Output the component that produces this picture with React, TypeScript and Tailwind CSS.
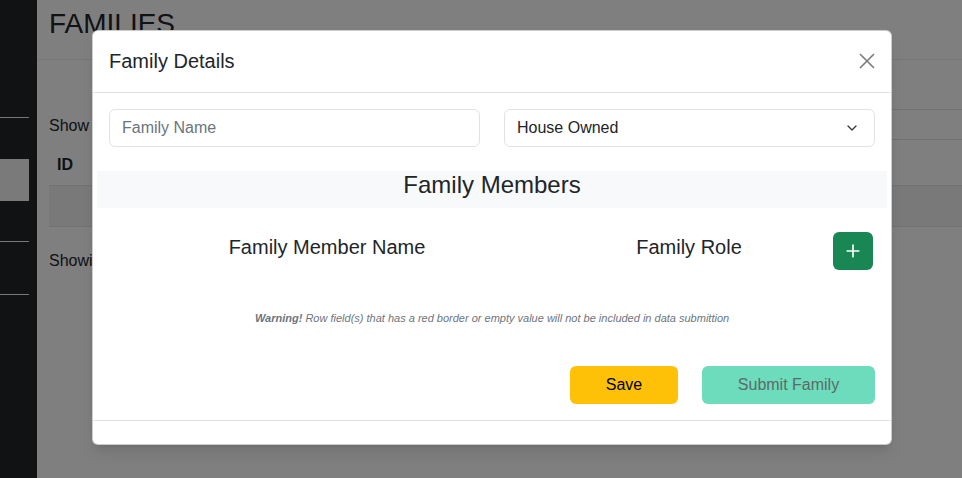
import { ChevronDown, Plus } from 'lucide-react';

const FONT = "font-['Liberation_Sans',Arial,sans-serif]";

function Sidebar() {
  return (
    <aside className="w-[37px] shrink-0 bg-[#222428] pt-[117px]">
      <div className="h-px w-[29px] bg-[#e9ecef]" />
      <div className="mt-[41px] h-[42px] w-[29px] bg-[#f4f4f4]" />
      <div className="mt-[40px] h-px w-[29px] bg-[#e9ecef]" />
      <div className="mt-[52px] h-px w-[29px] bg-[#e9ecef]" />
    </aside>
  );
}

function Page() {
  return (
    <main className="flex-1 bg-white text-[#212529]">
      {/* Header */}
      <div className="h-[60px] border-b border-[#ececec] px-3 pt-[6px]">
        <h1 className="text-[28px] leading-[36px]">FAMILIES</h1>
      </div>

      {/* Table controls */}
      <div className="mt-[49px] flex items-start justify-between pl-3">
        <span className="mt-[5px] text-base">Show</span>
        <div className="h-[31px] w-[180px] border-y border-[#e2e2e2]" />
      </div>

      {/* Table */}
      <div className="ml-3 mt-[10px]">
        <div className="flex h-[36px] items-start border-b border-[#e2e2e2] px-2 pt-[3px]">
          <span className="text-base font-bold">ID</span>
        </div>
        <div className="h-[41px] border-b border-[#e2e2e2] bg-[#f2f2f2]" />
      </div>

      <p className="mt-[22px] pl-3 text-base">Showing 0 to 0 of 0 entries</p>
    </main>
  );
}

function CloseIcon() {
  return (
    <svg width="16" height="16" viewBox="0 0 16 16" className="text-[#7d7d7d]">
      <path d="M1 1 15 15M15 1 1 15" stroke="currentColor" strokeWidth="1.7" fill="none" />
    </svg>
  );
}

function FamilyModal() {
  return (
    <div className="absolute left-[92px] top-[30px] w-[800px] overflow-hidden rounded-[6px] border border-black/20 bg-white text-[#212529] shadow-lg">
      {/* Header */}
      <div className="flex h-[62px] items-center justify-between border-b border-[#dee2e6] px-4 pb-px">
        <h5 className="text-[20px] leading-6">Family Details</h5>
        <CloseIcon />
      </div>

      {/* Body */}
      <div className="p-4">
        <div className="grid grid-cols-2 gap-6">
          <div className="flex h-[38px] items-center rounded-[6px] border border-[#dee2e6] px-3 text-base text-[#6c757d]">
            Family Name
          </div>
          <div className="flex h-[38px] items-center justify-between rounded-[6px] border border-[#dee2e6] pl-3 pr-[14px] text-base">
            House Owned
            <ChevronDown size={16} strokeWidth={2} className="text-[#343a40]" />
          </div>
        </div>

        <div className="-mx-3 mt-6 flex h-[37px] items-start justify-center bg-[#f8f9fa] text-[24px] leading-7">
          Family Members
        </div>

        <div className="mt-6 flex h-[38px] items-center">
          <div className="w-[436px] pb-2 text-center text-[20px]">Family Member Name</div>
          <div className="w-[288px] pb-2 text-center text-[20px]">Family Role</div>
          <button className="flex h-[38px] w-[40px] items-center justify-center rounded-[6px] bg-[#198754] text-white">
            <Plus size={20} strokeWidth={2} />
          </button>
        </div>

        <p className="mt-[42px] text-center text-[11px] leading-3 italic text-[#6c757d]">
          <b>Warning!</b> Row field(s) that has a red border or empty value will not be included in data submittion
        </p>

        <div className="mt-[42px] flex justify-end gap-6">
          <button className="h-[38px] w-[108px] rounded-[6px] bg-[#ffc107] text-base text-black">Save</button>
          <button className="h-[38px] w-[173px] rounded-[6px] bg-[#6cdcbc] text-base text-[#5d6a66]">
            Submit Family
          </button>
        </div>
      </div>

      {/* Footer */}
      <div className="h-[24px] border-t border-[#dee2e6]" />
    </div>
  );
}

export default function App() {
  return (
    <div className={`relative flex h-[478px] w-full overflow-hidden ${FONT}`}>
      <Sidebar />
      <Page />
      <div className="absolute inset-0 bg-black/50" />
      <FamilyModal />
    </div>
  );
}
